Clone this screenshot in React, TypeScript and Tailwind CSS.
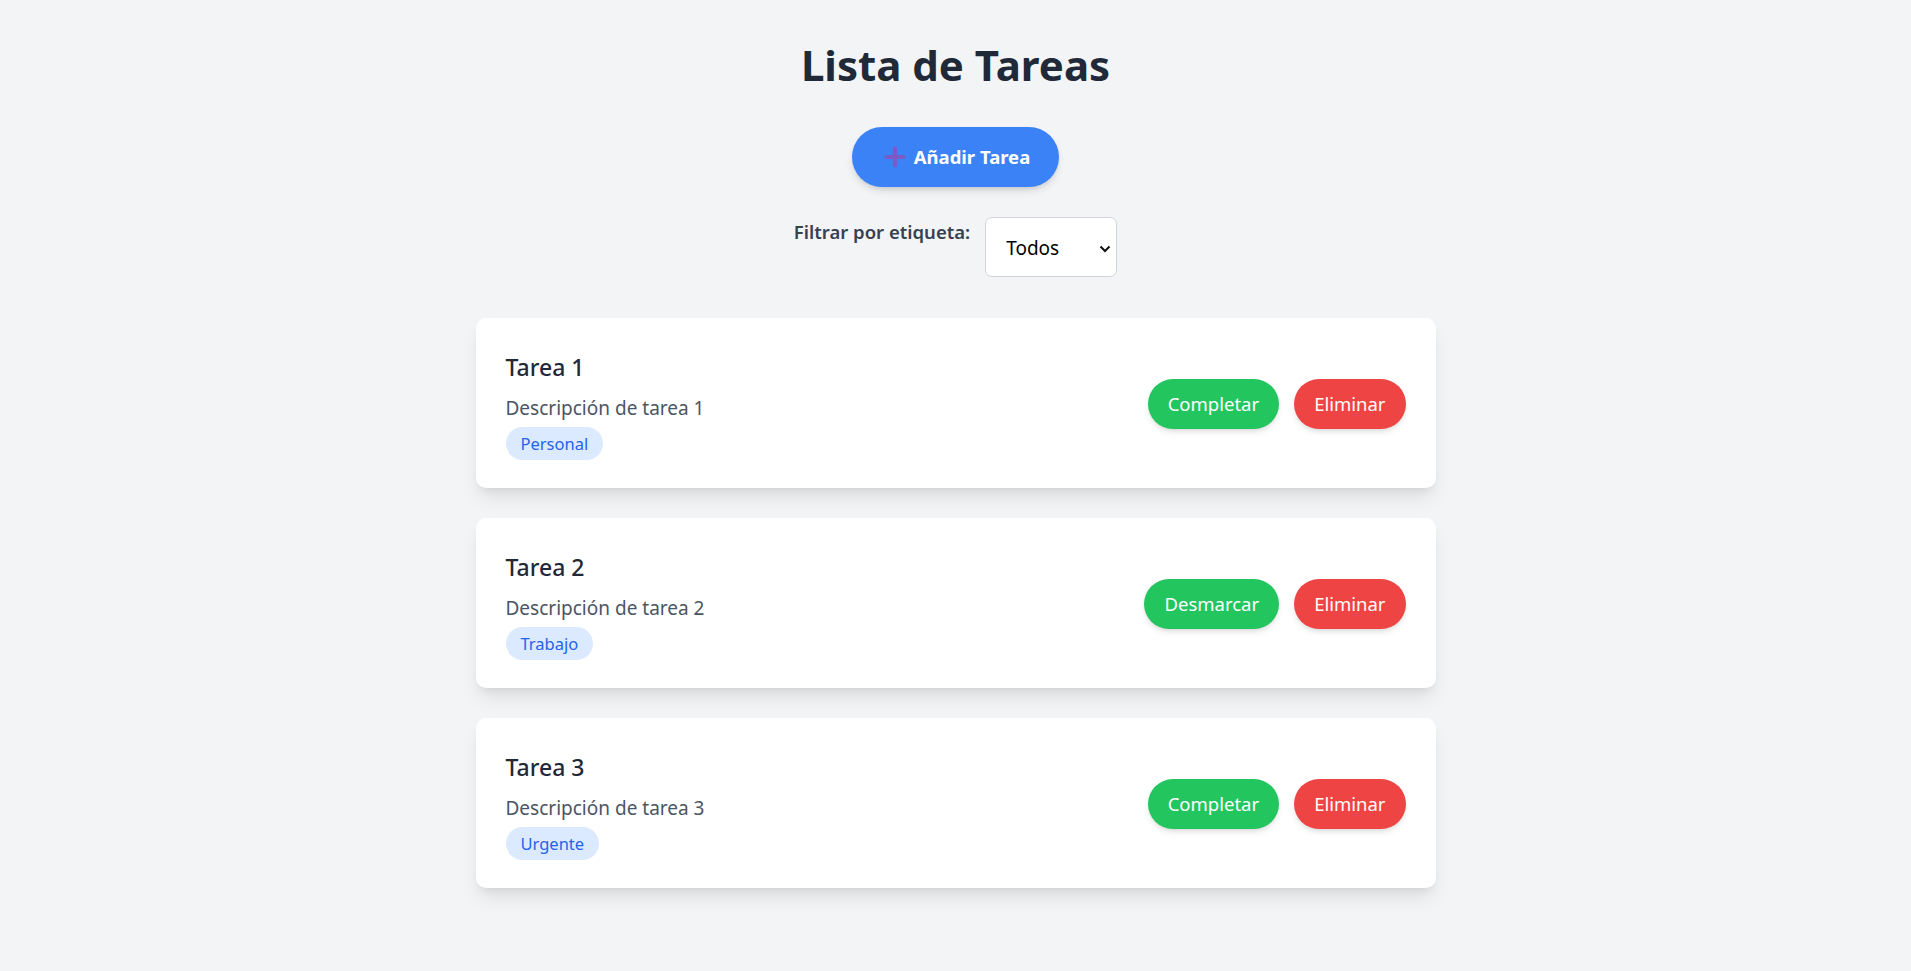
import { useState } from "react"

type Task = {
  id: number
  title: string
  description: string
  tag: string
  completed: boolean
}

const initialTasks: Task[] = [
  { id: 1, title: "Tarea 1", description: "Descripción de tarea 1", tag: "Personal", completed: false },
  { id: 2, title: "Tarea 2", description: "Descripción de tarea 2", tag: "Trabajo", completed: true },
  { id: 3, title: "Tarea 3", description: "Descripción de tarea 3", tag: "Urgente", completed: false },
]

export default function App() {
  const [tasks, setTasks] = useState<Task[]>(initialTasks)
  const [filter, setFilter] = useState("Todos")

  const toggleTask = (id: number) => {
    setTasks(tasks.map((t) => (t.id === id ? { ...t, completed: !t.completed } : t)))
  }

  const deleteTask = (id: number) => {
    setTasks(tasks.filter((t) => t.id !== id))
  }

  const addTask = () => {
    const n = tasks.length + 1
    setTasks([...tasks, { id: Date.now(), title: `Tarea ${n}`, description: `Descripción de tarea ${n}`, tag: "Personal", completed: false }])
  }

  const visible = filter === "Todos" ? tasks : tasks.filter((t) => t.tag === filter)

  return (
    <div className="min-h-screen bg-[#f3f4f6] pt-[40px] pb-[40px] font-['Noto_Sans',sans-serif]">
      <h1 className="text-center text-[42px] font-bold leading-[50px] text-[#1f2937] mb-[37px]">Lista de Tareas</h1>

      <div className="flex justify-center mb-[30px]">
        <button
          onClick={addTask}
          className="flex items-center h-[60px] pl-[32px] pr-[29px] rounded-full bg-[#3b82f6] text-white text-[18.5px] font-bold shadow-[0_5px_8px_-2px_rgba(0,0,0,0.15),0_2px_5px_-2px_rgba(0,0,0,0.1)]"
        >
          <svg width="22" height="22" viewBox="0 0 22 22" className="mr-[8px]">
            <path d="M11 2.5v17M2.5 11h17" stroke="#7a5bc6" strokeWidth="4.2" strokeLinecap="round" />
          </svg>
          Añadir Tarea
        </button>
      </div>

      <div className="flex justify-center items-start mb-[41px]">
        <label htmlFor="filter" className="mr-[15px] text-[18.5px] leading-[30px] font-semibold text-[#374151]">
          Filtrar por etiqueta:
        </label>
        <div className="relative">
          <select
            id="filter"
            value={filter}
            onChange={(e) => setFilter(e.target.value)}
            className="appearance-none h-[60px] w-[132px] pl-[20px] pr-[30px] pt-[3px] bg-white border border-[#d1d5db] rounded-[7px] text-[19px] text-black"
          >
            <option>Todos</option>
            <option>Personal</option>
            <option>Trabajo</option>
            <option>Urgente</option>
          </select>
          <svg width="12" height="8" viewBox="0 0 12 8" className="absolute right-[6px] top-[28px] pointer-events-none">
            <path d="M1.5 1.5l4.5 4.5 4.5-4.5" fill="none" stroke="#111" strokeWidth="2" />
          </svg>
        </div>
      </div>

      <div className="mx-auto w-[960px] flex flex-col gap-[30px]">
        {visible.map((task) => (
          <div
            key={task.id}
            className="flex items-center justify-between bg-white rounded-[10px] px-[30px] pt-[30px] pb-[28px] shadow-[0_12px_19px_-4px_rgba(0,0,0,0.1),0_5px_8px_-5px_rgba(0,0,0,0.1)]"
          >
            <div>
              <h3 className="text-[23px] leading-[38px] font-medium text-[#1f2937] mb-[7px]">{task.title}</h3>
              <p className="text-[19px] leading-[30px] text-[#4b5563]">{task.description}</p>
              <span className="inline-block mt-[4px] rounded-full bg-[#dbeafe] text-[#2563eb] px-[15px] py-[6px] text-[16.5px] leading-[21px]">
                {task.tag}
              </span>
            </div>
            <div className="flex gap-[15px]">
              <button
                onClick={() => toggleTask(task.id)}
                className="h-[50px] px-[20px] rounded-full bg-[#22c55e] text-white text-[18.5px] shadow-[0_4px_6px_-1px_rgba(0,0,0,0.1),0_2px_4px_-2px_rgba(0,0,0,0.1)]"
              >
                {task.completed ? "Desmarcar" : "Completar"}
              </button>
              <button
                onClick={() => deleteTask(task.id)}
                className="h-[50px] px-[20px] rounded-full bg-[#ef4444] text-white text-[18.5px] shadow-[0_4px_6px_-1px_rgba(0,0,0,0.1),0_2px_4px_-2px_rgba(0,0,0,0.1)]"
              >
                Eliminar
              </button>
            </div>
          </div>
        ))}
      </div>
    </div>
  )
}
